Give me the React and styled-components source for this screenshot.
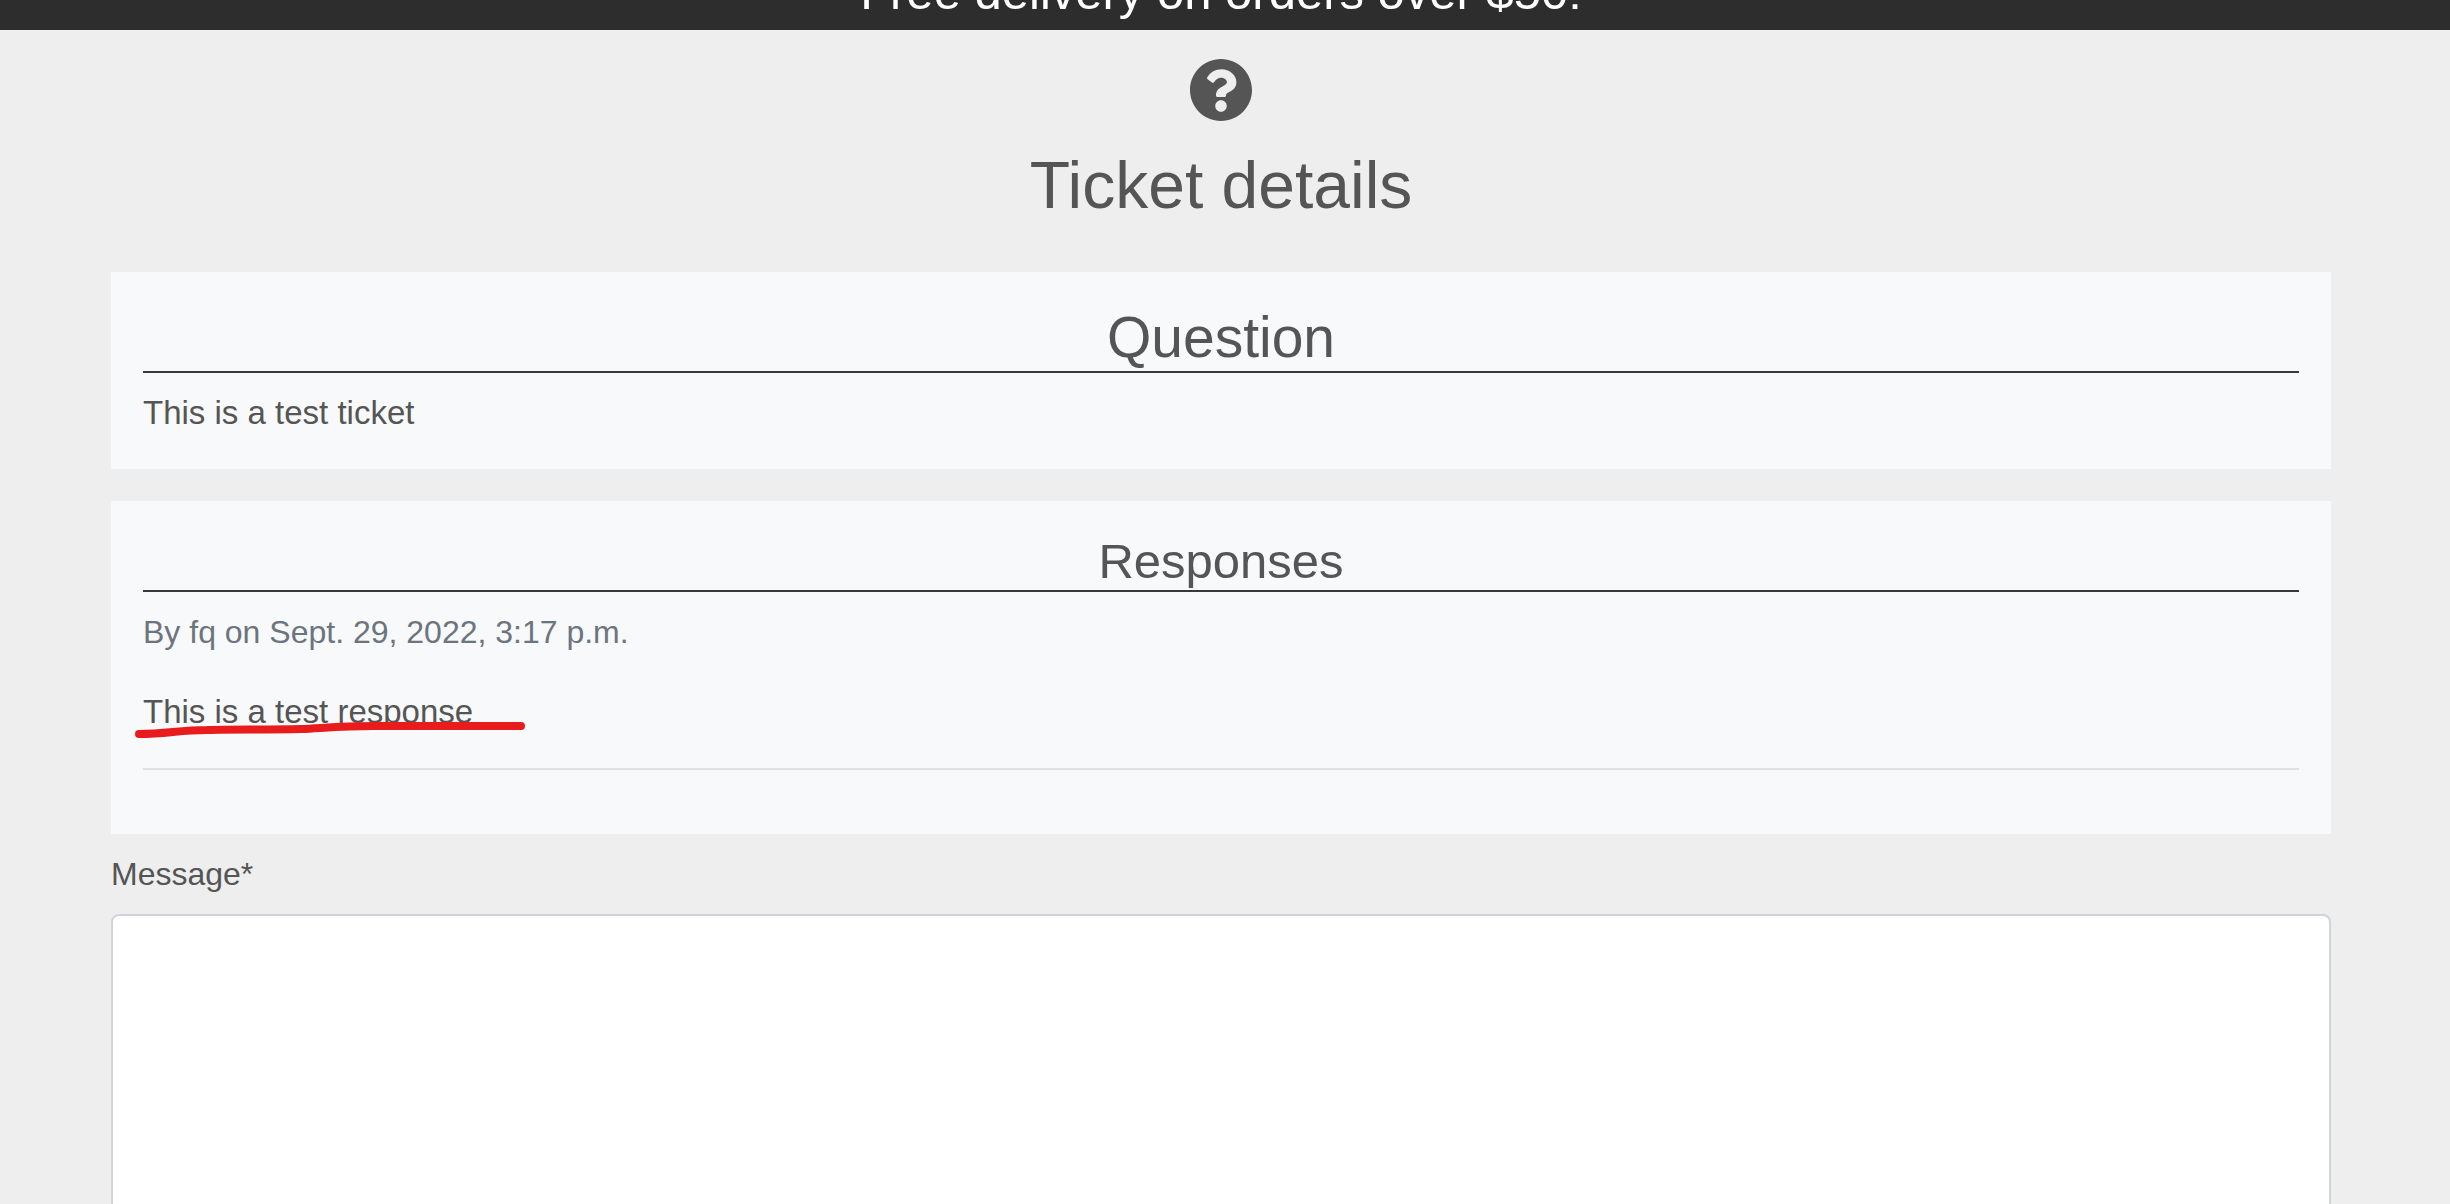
import React from "react";
import styled, { createGlobalStyle } from "styled-components";
import { FaQuestionCircle } from "react-icons/fa";

const GlobalStyle = createGlobalStyle`
  *, *::before, *::after { box-sizing: border-box; }
  html, body { margin: 0; }
  body {
    background: #eee;
    color: #555;
    font-family: "Liberation Sans", Arial, sans-serif;
    font-size: 32px;
    line-height: 48px;
  }
  html, body, #root { height: 100%; }
  h1, h2, h3, p { margin: 0; font-weight: 400; }
`;

const Page = styled.div`
  height: 100%;
  overflow: hidden;
`;

const Banner = styled.header`
  display: flex;
  flex-direction: column;
  justify-content: flex-end;
  align-items: center;
  height: 30px;
  padding-right: 8px;
  overflow: hidden;
  background: #2d2d2d;
  color: #fff;
`;

const BannerText = styled.p`
  flex: none;
  padding-bottom: 14px;
  font-size: 49px;
  line-height: 48px;
`;

const Container = styled.main`
  margin: 0 119px 0 111px;
  padding-top: 28px;
`;

const Intro = styled.div`
  display: flex;
  flex-direction: column;
  align-items: center;
  gap: 25px;
  margin-bottom: 48px;
`;

const Title = styled.h1`
  font-size: 66px;
  line-height: 77px;
`;

const Card = styled.section`
  margin-bottom: ${(p) => (p.$last ? 16 : 32)}px;
  padding: 32px;
  background: #f8f9fb;
`;

const CardTitle = styled.h2`
  margin-bottom: 16px;
  border-bottom: 2px solid #343a40;
  font-size: ${(p) => (p.$small ? 49 : 57)}px;
  line-height: ${(p) => (p.$small ? 57 : 67)}px;
  text-align: center;
`;

const CardText = styled.p`
  position: relative;
  font-size: 33px;
`;

const Response = styled.article`
  display: flex;
  flex-direction: column;
  gap: 32px;
  padding-bottom: 32px;
  margin-bottom: 32px;
  border-bottom: 2px solid #dee2e6;
`;

const Byline = styled.p`
  color: #6c757d;
`;

const Underline = styled.svg`
  position: absolute;
  left: -10px;
  top: 30px;
  overflow: visible;
`;

const Form = styled.form`
  display: flex;
  flex-direction: column;
  gap: 16px;
`;

const MessageBox = styled.textarea`
  display: block;
  width: 100%;
  padding: 12px 24px;
  border: 2px solid #ced4da;
  border-radius: 8px;
  background: #fff;
  color: inherit;
  font: inherit;
  resize: none;
`;

export default function App() {
  return (
    <Page>
      <GlobalStyle />
      <Banner>
        <BannerText>Free delivery on orders over $50!</BannerText>
      </Banner>
      <Container>
        <Intro>
          <FaQuestionCircle size={64} aria-hidden="true" />
          <Title>Ticket details</Title>
        </Intro>
        <Card>
          <CardTitle>Question</CardTitle>
          <CardText>This is a test ticket</CardText>
        </Card>
        <Card $last>
          <CardTitle $small>Responses</CardTitle>
          <Response>
            <Byline>By fq on Sept. 29, 2022, 3:17 p.m.</Byline>
            <CardText>
              This is a test response
              <Underline width="396" height="20" viewBox="0 0 396 20" aria-hidden="true">
                <path
                  d="M6 16 C34 16 46 12 74 12 C100 11 130 12 168 11 C190 10 210 8 240 8 L388 8"
                  fill="none"
                  stroke="#e81b1d"
                  strokeWidth="8"
                  strokeLinecap="round"
                  strokeLinejoin="round"
                />
              </Underline>
            </CardText>
          </Response>
        </Card>
        <Form>
          <label htmlFor="message">Message*</label>
          <MessageBox id="message" name="message" rows={10} required />
        </Form>
      </Container>
    </Page>
  );
}
